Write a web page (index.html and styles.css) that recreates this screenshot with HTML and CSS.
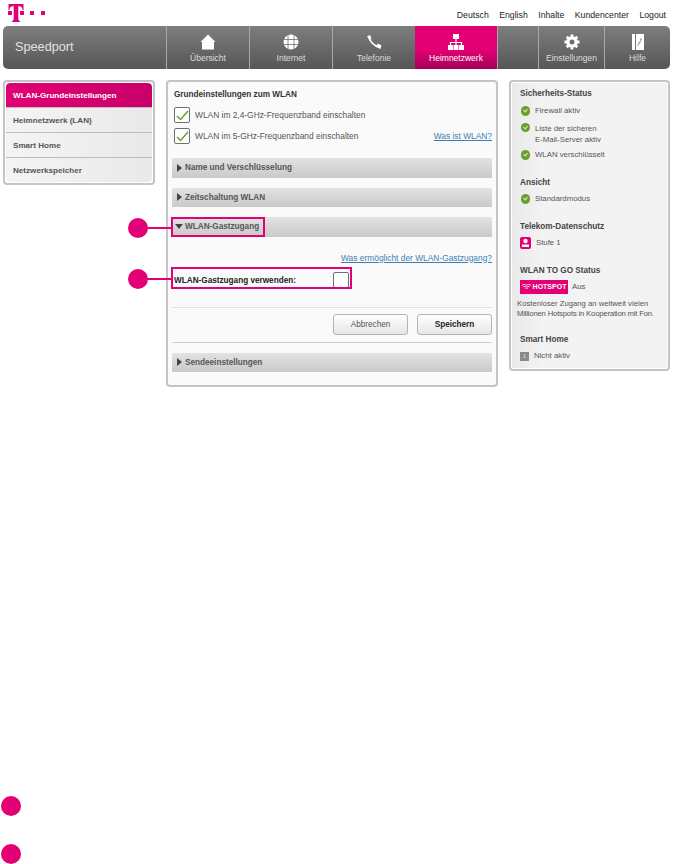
FILE: index.html
```html
<!DOCTYPE html>
<html lang="de">
	<head>
		<meta charset="UTF-8">
		<meta name="viewport" content="width=device-width, initial-scale=1.0">
		<title>Speedport</title>
		<link rel="stylesheet" href="styles.css">
	</head>

	<body>
		<div class="top">
			<svg class="logo" width="37" height="18" viewBox="0 0 37 18">
				<path d="M.5 0H15.500V6H14.500C14.500 3.500 13 2 10.300 2V15C10.300 16.200 11 16.800 12 16.800V18H4V16.800C5 16.800 5.700 16.200 5.700 15V2C3 2 1.500 3.500 1.500 6H.5Z"/>
				<rect x="0" y="7" width="4" height="4"/>
				<rect x="12" y="7" width="4" height="4"/>
				<rect x="22" y="7" width="4" height="4"/>
				<rect x="33" y="7" width="4" height="4"/>
			</svg>
			<div class="top-links">
				<a>Deutsch</a>
				<a>English</a>
				<a>Inhalte</a>
				<a>Kundencenter</a>
				<a>Logout</a>
			</div>
		</div>

		<div class="nav">
			<div class="brand">Speedport</div>
			<div class="nav-item w83">
				<svg width="16" height="16" viewBox="0 0 16 16"><path d="M8 .5l7.500 7.500-1.500 0v7.500h-12v-7.500l-1.500 0z"/></svg>
				<span>Übersicht</span>
			</div>
			<div class="nav-item w83">
				<svg width="16" height="16" viewBox="0 0 16 16">
					<circle cx="8" cy="8" r="7.500"/>
					<path d="M.5 5.500h15M.5 10.500h15M5 0v16M11 0v16" stroke="#6e6e6e" stroke-width=".8" fill="none"/>
				</svg>
				<span>Internet</span>
			</div>
			<div class="nav-item w83">
				<svg width="16" height="16" viewBox="0 0 16 16">
					<path d="M2.500 2C3.500 7 8 12 14.500 14" fill="none" stroke="#fff" stroke-width="1.800"/>
					<path d="M1 2.500L4 1l1.500 3.500L3.500 6zM10.500 11.500l1.500-2 3.500 2L14 15z"/>
				</svg>
				<span>Telefonie</span>
			</div>
			<div class="nav-item active">
				<svg width="16" height="16" viewBox="0 0 16 16">
					<rect x="5" y="0" width="6" height="5"/>
					<rect x="0" y="11" width="5" height="5"/>
					<rect x="5.500" y="11" width="5" height="5"/>
					<rect x="11" y="11" width="5" height="5"/>
					<path d="M8 5v6M2.500 11V8.500h11V11" fill="none" stroke="#fff" stroke-width="1.200"/>
				</svg>
				<span>Heimnetzwerk</span>
			</div>
			<div class="nav-item w41"></div>
			<div class="nav-item w66">
				<svg width="16" height="16" viewBox="0 0 16 16">
					<circle cx="8" cy="8" r="4.200" fill="none" stroke="#fff" stroke-width="3"/>
					<path d="M8 .5v15M.5 8h15M2.700 2.700l10.600 10.600M13.300 2.700L2.700 13.300" stroke="#fff" stroke-width="2.800"/>
					<circle cx="8" cy="8" r="2.500" fill="#6e6e6e"/>
				</svg>
				<span>Einstellungen</span>
			</div>
			<div class="nav-item w66 last">
				<svg width="12" height="16" viewBox="0 0 12 16">
					<rect width="12" height="16"/>
					<path d="M3.500 0v16M5.500 11.500l3.500-5M8 4.500l2 1.500" stroke="#666" stroke-width=".9" fill="none"/>
				</svg>
				<span>Hilfe</span>
			</div>
		</div>

		<div class="columns">
			<div class="panel side-menu">
				<ul class="menu">
					<li class="selected">WLAN-Grundeinstellungen</li>
					<li>Heimnetzwerk (LAN)</li>
					<li>Smart Home</li>
					<li>Netzwerkspeicher</li>
				</ul>
			</div>

			<div class="panel content">
				<h3>Grundeinstellungen zum WLAN</h3>
				<label class="check-row">
					<span class="box"><svg width="13" height="11" viewBox="0 0 13 11"><path d="M1 6l3.500 3.500 7.500-8.500" fill="none" stroke="#6a9e2d" stroke-width="1.500"/></svg></span>
					WLAN im 2,4-GHz-Frequenzband einschalten
				</label>
				<label class="check-row">
					<span class="box"><svg width="13" height="11" viewBox="0 0 13 11"><path d="M1 6l3.500 3.500 7.500-8.500" fill="none" stroke="#6a9e2d" stroke-width="1.500"/></svg></span>
					WLAN im 5-GHz-Frequenzband einschalten
					<a class="help push">Was ist WLAN?</a>
				</label>

				<div class="bar first"><i class="arrow"></i>Name und Verschlüsselung</div>
				<div class="bar"><i class="arrow"></i>Zeitschaltung WLAN</div>
				<div class="bar"><i class="arrow open"></i>WLAN-Gastzugang</div>

				<div class="help-row"><a class="help">Was ermöglicht der WLAN-Gastzugang?</a></div>
				<div class="guest-row">
					<strong>WLAN-Gastzugang verwenden:</strong>
					<span class="box"></span>
				</div>

				<div class="actions">
					<button>Abbrechen</button>
					<button class="save">Speichern</button>
				</div>

				<div class="bar"><i class="arrow"></i>Sendeeinstellungen</div>
			</div>

			<div class="panel status">
				<div class="status-inner">
					<h4>Sicherheits-Status</h4>
					<p class="row row-firewall"><i class="dot"></i>Firewall aktiv</p>
					<p class="row row-two"><i class="dot"></i><span>Liste der sicheren<br>E-Mail-Server aktiv</span></p>
					<p class="row row-wlan"><i class="dot"></i>WLAN verschlüsselt</p>

					<h4 class="gap-a">Ansicht</h4>
					<p class="row row-mode"><i class="dot"></i>Standardmodus</p>

					<h4 class="gap-a">Telekom-Datenschutz</h4>
					<p class="row row-level">
						<svg class="shield" width="11" height="12" viewBox="0 0 11 12">
							<rect width="11" height="12" rx="2" fill="#e20074"/>
							<circle cx="5.500" cy="4" r="2.200" fill="#fff"/>
							<rect x="2" y="7.500" width="7" height="2.500" fill="#fff"/>
						</svg>
						Stufe 1
					</p>

					<h4 class="gap-b">WLAN TO GO Status</h4>
					<p class="row row-hotspot"><span class="hotspot">
						<svg width="9" height="6" viewBox="0 0 9 6"><path d="M0 1.500c2.500-2 6.500-2 9 0M1.500 3c1.800-1.300 4.200-1.300 6 0M3 4.500c1-.7 2-.7 3 0" fill="none" stroke="#fff" stroke-width=".9"/></svg>
						HOTSPOT</span>Aus</p>
					<p class="note">Kostenloser Zugang an weltweit vielen<br><span class="tight">Millionen Hotspots in Kooperation mit Fon.</span></p>

					<h4 class="gap-c">Smart Home</h4>
					<p class="row row-mode"><i class="grey">1</i>Nicht aktiv</p>
				</div>
			</div>
		</div>

		<!-- callouts sit over the page -->
		<div class="mark box-a"></div>
		<div class="mark box-b"></div>
		<div class="lead lead-a"></div>
		<div class="lead lead-b"></div>
		<div class="num num-a"></div>
		<div class="num num-b"></div>
		<div class="num num-c"></div>
		<div class="num num-d"></div>
	</body>
</html>
```

FILE: styles.css
```css
body {
	margin: 0;
	width: 673px;
	height: 864px;
	position: relative;
	overflow: hidden;
	background-color: #fff;
	color: #555;
	font-family: "Liberation Sans", Arial, sans-serif;
	font-size: 8.400px;
}

.top {
	height: 26px;
	display: flex;
	justify-content: space-between;
}

.logo {
	fill: #e20074;
	margin: 4px 0 0 8px;
}

.top-links {
	display: flex;
	gap: 10.500px;
	padding: 10px 7px 0 0;
	color: #222;
	font-size: 8.700px;
	line-height: 10px;
}

.nav {
	margin: 0 3px;
	height: 43px;
	display: flex;
	background: linear-gradient(#7e7e7e, #565656);
	border-radius: 5px;
	overflow: hidden;
}

.brand {
	width: 163px;
	padding: 13px 0 0 12px;
	box-sizing: border-box;
	color: #e2e2e2;
	font-size: 12.700px;
	line-height: 16px;
}

.nav-item {
	box-sizing: border-box;
	display: flex;
	flex-direction: column;
	align-items: center;
	padding-top: 8px;
	border-left: 1px solid #a8a8a8;
	color: #ddd;
	font-size: 8.500px;
	line-height: 10px;
}

.nav-item svg {
	fill: #fff;
	margin-bottom: 3px;
}

.w83 { width: 83px; }
.w41 { width: 41px; }
.w66 { width: 66px; }
.last { flex: 1; }

.nav-item.active {
	width: 82px;
	border-left: none;
	color: #fff;
	background: linear-gradient(#e20074 55%, #a3005a);
}

.columns {
	margin: 11px 3px 0;
	display: flex;
	align-items: flex-start;
}

.panel {
	box-sizing: border-box;
	border: 2px solid #c4c4c4;
	border-radius: 4px;
}

.side-menu {
	width: 152px;
	height: 105px;
	margin-right: 11px;
	padding: 1px;
}

.menu {
	list-style: none;
	margin: 0;
	padding: 0;
	height: 99px;
	border-radius: 4px;
	background: linear-gradient(90deg, #f4f4f4, #e9e9e9);
	font-weight: bold;
	font-size: 8.100px;
	overflow: hidden;
}

.menu li {
	box-sizing: border-box;
	height: 25px;
	padding: 0 7px;
	line-height: 25px;
	border-bottom: 1px solid #bdbdbd;
}

.menu li:last-child {
	border-bottom: none;
}

.menu .selected {
	color: #fff;
	background: linear-gradient(90deg, #e20074, #c8006a);
	border-radius: 4px 4px 0 0;
}

.content {
	width: 332px;
	height: 307px;
	margin-right: 11px;
	padding: 8px 4px 0;
	background-color: #fafafa;
}

h3, h4 {
	margin: 0;
	font-size: 8.200px;
	line-height: 10px;
	font-weight: bold;
}

.content h3 {
	padding-left: 2px;
	color: #333;
}

.check-row {
	display: flex;
	align-items: center;
	height: 16px;
	margin-top: 5px;
	padding-left: 2px;
	gap: 5px;
}

h3 + .check-row {
	margin-top: 7px;
}

.box {
	box-sizing: border-box;
	width: 16px;
	height: 16px;
	display: flex;
	align-items: center;
	justify-content: center;
	background-color: #fff;
	border: 1px solid #6f6f6f;
	border-radius: 2px;
}

.help {
	color: #3b7fb5;
	text-decoration: underline;
}

.push {
	margin-left: auto;
}

.bar {
	height: 19.500px;
	margin-top: 10px;
	padding-left: 5px;
	display: flex;
	align-items: center;
	gap: 3px;
	background: linear-gradient(#e2e2e2, #c9c9c9);
	border-radius: 2px 2px 0 0;
	font-weight: bold;
	font-size: 8.200px;
}

.bar.first {
	margin-top: 14px;
}

.arrow {
	width: 0;
	height: 0;
	border-left: 5px solid #444;
	border-top: 4px solid transparent;
	border-bottom: 4px solid transparent;
}

.arrow.open {
	margin: 0 -1px 0 -2px;
	border-top: 5px solid #444;
	border-left: 4px solid transparent;
	border-right: 4px solid transparent;
	border-bottom: none;
}

.help-row {
	margin-top: 15px;
	text-align: right;
	line-height: 12px;
}

.guest-row {
	width: 175px;
	height: 16px;
	margin-top: 8.500px;
	padding-left: 2px;
	display: flex;
	align-items: center;
	justify-content: space-between;
	color: #222;
	font-size: 8.200px;
}

.actions {
	margin-top: 18.500px;
	height: 21px;
	padding: 6px 0 7px;
	display: flex;
	justify-content: flex-end;
	gap: 9px;
	border-top: 1px solid #e2e2e2;
	border-bottom: 1px solid #cfcfcf;
}

button {
	width: 75px;
	height: 21px;
	padding: 0;
	border: 1px solid #b4b4b4;
	border-radius: 3px;
	background: linear-gradient(#fff, #e6e6e6);
	color: #555;
	font-family: inherit;
	font-size: 8.200px;
}

button.save {
	color: #222;
	font-weight: bold;
}

.status {
	width: 161px;
	height: 291px;
	padding: 1px;
}

.status-inner {
	height: 285px;
	box-sizing: border-box;
	padding: 6px 8px 0;
	background: linear-gradient(90deg, #e9e9e9, #f3f3f3 20%);
	font-size: 7.800px;
	white-space: nowrap;
}

.status h4 {
	color: #444;
}

.row {
	margin: 0;
	display: flex;
	align-items: center;
	gap: 5px;
	height: 12px;
	line-height: 12px;
}

.row-firewall { margin-top: 6px; }
.row-wlan { margin-top: 4.500px; }
.row-mode { margin-top: 5px; }

.row-two {
	align-items: flex-start;
	height: 22px;
	margin-top: 5.500px;
	line-height: 11px;
}

.dot {
	flex: none;
	position: relative;
	width: 9.500px;
	height: 9.500px;
	margin-left: .5px;
	border-radius: 50%;
	background-color: #6a9e2d;
}

.dot::after {
	content: "";
	position: absolute;
	left: 3px;
	top: 2px;
	width: 2px;
	height: 3px;
	border-right: 1px solid #dcebc8;
	border-bottom: 1px solid #dcebc8;
	transform: rotate(40deg);
}

.gap-a { margin-top: 17px; }
.gap-b { margin-top: 16.500px; }
.gap-c { margin-top: 16px; }

.row-level {
	gap: 5px;
	height: 13px;
	margin-top: 4.500px;
}

.shield {
	flex: none;
}

.row-hotspot {
	margin-top: 4px;
	height: 14px;
	gap: 4px;
}

.hotspot {
	width: 48px;
	height: 14px;
	display: flex;
	align-items: center;
	justify-content: center;
	gap: 2px;
	background-color: #e20074;
	color: #fff;
	font-size: 7px;
	font-weight: bold;
}

.note {
	margin: 5px 0 0 -3px;
	line-height: 10px;
	font-size: 7.700px;
}

.tight {
	letter-spacing: -.18px;
}

.grey {
	flex: none;
	width: 9px;
	height: 9px;
	background-color: #8a8a8a;
	color: #ddd;
	font-size: 6px;
	font-style: normal;
	line-height: 9px;
	text-align: center;
}

.mark {
	position: absolute;
	box-sizing: border-box;
	border: 2px solid #e20074;
}

.box-a {
	left: 171px;
	top: 217px;
	width: 94px;
	height: 20px;
}

.box-b {
	left: 171px;
	top: 267px;
	width: 181px;
	height: 22px;
}

.lead {
	position: absolute;
	left: 147px;
	width: 24px;
	height: 2px;
	background-color: #e20074;
}

.lead-a { top: 227px; }
.lead-b { top: 278px; }

.num {
	position: absolute;
	width: 20px;
	height: 20px;
	border-radius: 50%;
	background-color: #e20074;
}

.num-a { left: 128px; top: 218px; }
.num-b { left: 128px; top: 269px; }
.num-c { left: 1px; top: 796px; }
.num-d { left: 1px; top: 844px; }
```
